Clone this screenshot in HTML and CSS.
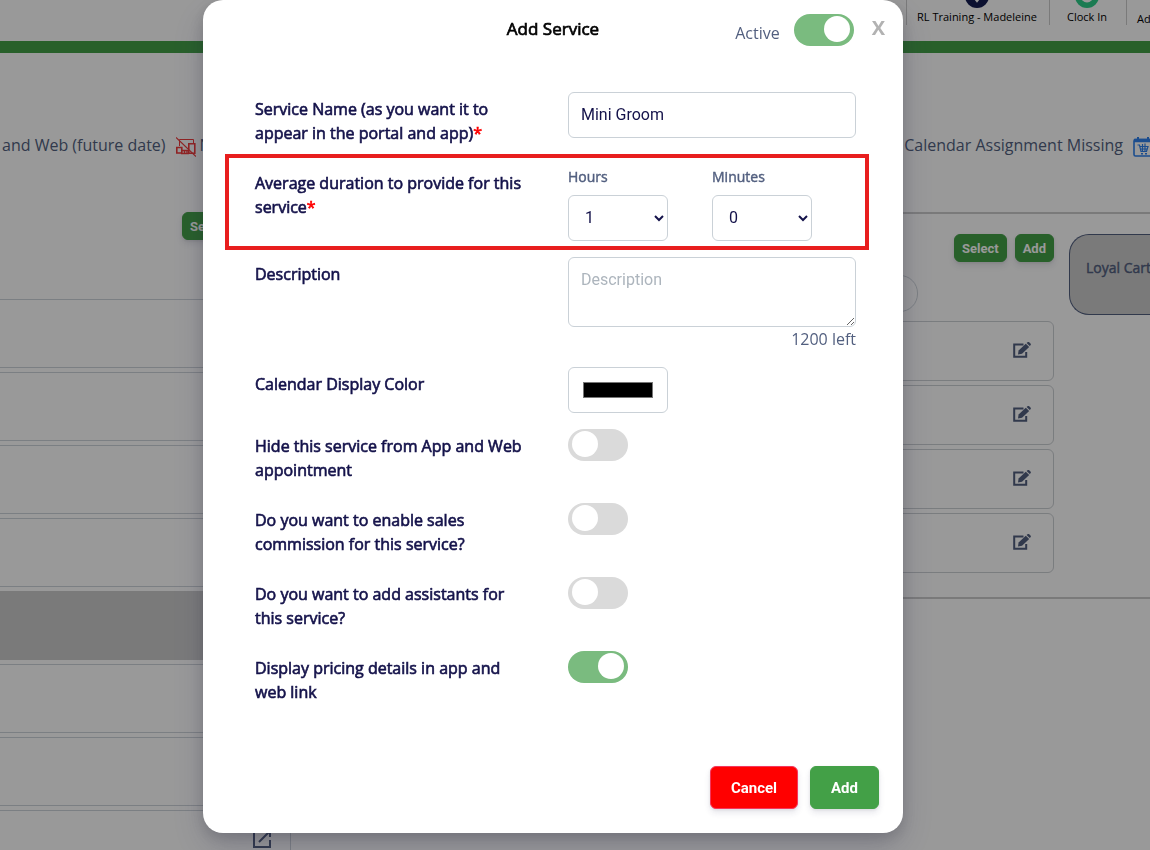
FILE: index.html
```
<!DOCTYPE html>
<html lang="en">
<head>
    <meta charset="UTF-8">
    <meta name="viewport" content="width=device-width, initial-scale=1.0">
    <title>Add Service</title>
    <link rel="stylesheet" href="styles.css">
</head>
<body>

<svg class="sprite" aria-hidden="true">
    <symbol id="icon-edit" viewBox="0 0 18 17">
        <path d="M10.500 2.400H1.200v12.400h12V10" fill="none" stroke="currentColor" stroke-width="2"/>
        <path d="M5 12.400l.6-4L12.800 1.800l3.400 3.200-7.200 6.800z" fill="currentColor"/>
        <path d="M13.600 1l.9-.7c.5-.4 1.200-.4 1.700 0l1.300 1.300c.5.5.5 1.200 0 1.700l-.8.8z" fill="currentColor"/>
    </symbol>
</svg>

<div class="page">
    <header class="topbar">
        <a class="topbar-item location" href="#">
            <svg width="30" height="10" viewBox="0 20 30 10" aria-hidden="true">
                <circle cx="15" cy="15" r="15" fill="#131c50"/>
                <path d="M10 17l5 6.500 5-6.500z" fill="#fff"/>
            </svg>
            <span>RL Training - Madeleine</span>
        </a>
        <a class="topbar-item clock" href="#">
            <svg width="30" height="10" viewBox="0 20 30 10" aria-hidden="true">
                <circle cx="15" cy="15" r="15" fill="#2dce89"/>
                <circle cx="15" cy="15" r="8" fill="#fff"/>
            </svg>
            <span>Clock In</span>
        </a>
        <a class="topbar-item admin" href="#"><span>Admin</span></a>
    </header>

    <div class="legend">
        <div class="legend-group">
            <span>and Web (future date)</span>
            <svg width="20" height="20" viewBox="0 0 20 20" fill="none" stroke="#f03a3a" aria-hidden="true">
                <path d="M3.500 9V2.500h14V6"/>
                <path d="M.8 10.500h5v5.500h-5zM12.800 6.800h6v9.500h-6z" stroke-width="1.600"/>
                <path d="M6 13.500h6.500M8.500 14v2M11 14v2M5 16.500h8" stroke-width="1.400"/>
                <path d="M0 .5l20 19" stroke-width="1.200"/>
            </svg>
            <span>Not</span>
        </div>
        <div class="legend-group legend-end">
            <span>Calendar Assignment Missing</span>
            <svg width="20" height="20" viewBox="0 0 20 20" fill="none" stroke="#2f80ed" aria-hidden="true">
                <rect x="1" y="2.500" width="18" height="16.500" rx="1.500" stroke-width="1.600"/>
                <path d="M1 3.500h18" stroke-width="3.500"/>
                <path d="M5 0v3M15 0v3" stroke-width="2"/>
                <path d="M4.500 8h2l1.500 6.500h5.500l1.500-5H7M8 12h6.500M9.500 7v7M12 6.500v8" stroke-width="1.200"/>
                <path d="M8 16.800h2M12 16.800h2" stroke-width="1.600"/>
            </svg>
        </div>
    </div>

    <div class="board">
        <section class="categories">
            <div class="category-actions"><button class="btn btn-small" type="button">Select</button></div>
            <div class="category-list">
                <div class="category"></div>
                <div class="category"></div>
                <div class="category"></div>
                <div class="category"></div>
                <div class="category selected"></div>
                <div class="category"></div>
                <div class="category"></div>
                <div class="category">
                    <svg width="20" height="20" viewBox="0 0 20 20" fill="none" stroke="currentColor" stroke-width="2" aria-hidden="true">
                        <path d="M9 2H2v16h16v-7M12 2h6v6M18 2L7 13"/>
                    </svg>
                </div>
            </div>
        </section>

        <section class="services">
            <div class="service-column">
                <div class="service-actions">
                    <button class="btn btn-small" type="button">Select</button>
                    <button class="btn btn-small" type="button">Add</button>
                </div>
                <input class="search" type="text" aria-label="Search">
                <div class="service-list">
                    <div class="service"><svg width="18" height="17" aria-hidden="true"><use href="#icon-edit"/></svg></div>
                    <div class="service"><svg width="18" height="17" aria-hidden="true"><use href="#icon-edit"/></svg></div>
                    <div class="service"><svg width="18" height="17" aria-hidden="true"><use href="#icon-edit"/></svg></div>
                    <div class="service"><svg width="18" height="17" aria-hidden="true"><use href="#icon-edit"/></svg></div>
                </div>
            </div>
            <div class="loyal-cart">Loyal Cart</div>
        </section>
    </div>
</div>

<div class="overlay">
    <form class="modal" role="dialog" aria-labelledby="modal-title">
        <div class="modal-header">
            <h1 id="modal-title">Add Service</h1>
            <div class="modal-status">
                <label for="active">Active</label>
                <input class="toggle" type="checkbox" id="active" checked>
                <button class="close" type="button" aria-label="Close">X</button>
            </div>
        </div>

        <div class="modal-body">
            <div class="row">
                <label class="row-label" for="name">Service Name (as you want it to appear in the portal and app)<span class="required">*</span></label>
                <input class="field" type="text" id="name" value="Mini Groom">
            </div>
            <div class="row">
                <span class="row-label">Average duration to provide for this service<span class="required">*</span></span>
                <div class="duration">
                    <div class="duration-part">
                        <label for="hours">Hours</label>
                        <select class="field" id="hours"><option>0</option><option selected>1</option><option>2</option></select>
                    </div>
                    <div class="duration-part">
                        <label for="minutes">Minutes</label>
                        <select class="field" id="minutes"><option>0</option><option>15</option><option>30</option></select>
                    </div>
                </div>
                <div class="highlight"></div>
            </div>
            <div class="row">
                <label class="row-label" for="description">Description</label>
                <div>
                    <textarea class="field" id="description" placeholder="Description" maxlength="1200"></textarea>
                    <div class="counter">1200 left</div>
                </div>
            </div>
            <div class="row">
                <label class="row-label" for="color">Calendar Display Color</label>
                <input class="field color" type="color" id="color" value="#000000">
            </div>
            <div class="row">
                <label class="row-label" for="hide">Hide this service from App and Web appointment</label>
                <input class="toggle" type="checkbox" id="hide">
            </div>
            <div class="row">
                <label class="row-label" for="commission">Do you want to enable sales commission for this service?</label>
                <input class="toggle" type="checkbox" id="commission">
            </div>
            <div class="row">
                <label class="row-label" for="assistants">Do you want to add assistants for this service?</label>
                <input class="toggle" type="checkbox" id="assistants">
            </div>
            <div class="row">
                <label class="row-label" for="pricing">Display pricing details in app and web link</label>
                <input class="toggle" type="checkbox" id="pricing" checked>
            </div>
        </div>

        <div class="modal-footer">
            <button class="btn btn-cancel" type="button">Cancel</button>
            <button class="btn" type="submit">Add</button>
        </div>
    </form>
</div>

</body>
</html>
```
FILE: styles.css
```
* { box-sizing: border-box; }
body {
    margin: 0;
    font-family: "Open Sans", sans-serif;
    font-size: 16px;
    line-height: 24px;
    color: #525f7f;
    background: #fff;
}
.sprite { display: none; }
.page { height: 100vh; overflow: hidden; }
button, input, select, textarea { font-family: Roboto, sans-serif; }

/* Top bar */
.topbar {
    display: flex;
    justify-content: flex-end;
    height: 53px;
    border-bottom: 12px solid #43a047;
}
.topbar-item {
    display: flex;
    flex-direction: column;
    align-items: center;
    height: 25px;
    padding: 0 12px 0 10px;
    border-left: 1px solid #ccc;
    color: #000;
    font-size: 11px;
    line-height: 17px;
    text-decoration: none;
    white-space: nowrap;
}
.location { width: 143px; }
.clock { width: 77px; }
.admin { width: 24px; padding: 10px 0 0 10px; align-items: flex-start; }

/* Icon legend */
.legend {
    display: flex;
    justify-content: space-between;
    padding: 80px 0 55px 2px;
}
.legend-group { display: flex; align-items: center; gap: 10px; }
.legend-group span:last-child { margin-left: -6px; }
.legend-end { margin-right: -3px; }
.legend svg { margin-top: 4px; }

/* Category and service lists */
.board { display: grid; grid-template-columns: 291px 1fr; }
.category-actions { display: flex; padding: 0 0 59px 182px; }
.category-list, .service-list { display: grid; gap: 4px; }
.category {
    display: flex;
    align-items: center;
    justify-content: flex-end;
    height: 69px;
    padding: 0 18px;
    margin-left: -4px;
    border: 1px solid #ced4da;
    color: #525f7f;
}
.category:last-child { align-items: flex-start; padding-top: 18px; }
.selected { background: #ccc; border-color: #ccc; }
.services {
    display: flex;
    justify-content: flex-end;
    align-items: flex-start;
    gap: 15px;
    height: 387px;
    padding-top: 20px;
    border-top: 2px solid #ccc;
    border-bottom: 2px solid #ccc;
}
.service-column { width: 350px; }
.service-actions { display: flex; justify-content: flex-end; gap: 8px; }
.search {
    display: block;
    width: 214px;
    height: 37px;
    margin: 13px 0 9px;
    border: 1px solid #ced4da;
    border-radius: 18px;
}
.service {
    display: flex;
    align-items: center;
    justify-content: flex-end;
    height: 60px;
    padding: 0 22px 2px 0;
    border: 1px solid #ccd0d4;
    border-radius: 6px;
}
.loyal-cart {
    width: 81px;
    height: 81px;
    padding: 21px 0 0 16px;
    overflow: hidden;
    white-space: nowrap;
    font-size: 14px;
    background: #ccc;
    border: 1px solid #525f7f;
    border-right: 0;
    border-radius: 20px 0 0 20px;
    -webkit-text-stroke: 0.03em;
}

/* Buttons */
.btn {
    height: 43px;
    padding: 0 20px;
    color: #fff;
    font-size: 15px;
    font-weight: bold;
    background: #43a047;
    border: 1px solid #43a047;
    border-radius: 6px;
    box-shadow: 0 4px 6px rgba(50, 50, 93, 0.11), 0 1px 3px rgba(0, 0, 0, 0.08);
}
.btn-small { height: 28px; padding: 0 7px; font-size: 13px; }
.btn-cancel { background: #f00; border-color: #f5365c; }

/* Modal */
.overlay {
    position: fixed;
    inset: 0;
    display: flex;
    justify-content: center;
    align-items: flex-start;
    padding-left: 6px;
    background: rgba(0, 0, 0, 0.4);
}
.modal {
    width: 100%;
    max-width: 700px;
    padding-bottom: 24px;
    background: #fff;
    border-radius: 20px;
    margin-right: 50px;
    box-shadow: 0 15px 35px rgba(50, 50, 93, 0.2), 0 5px 15px rgba(0, 0, 0, 0.17);
}
.modal-header {
    display: grid;
    grid-template-columns: 1fr auto 1fr;
    align-items: center;
    height: 60px;
    padding: 0 18px;
}
.modal-header h1 {
    grid-column: 2;
    margin: 0;
    padding-bottom: 2px;
    color: #000;
    font-size: 17px;
    font-weight: 400;
    -webkit-text-stroke: 0.04em;
}
.modal-status { display: flex; justify-content: flex-end; align-items: center; }
.modal-status label { margin: 6px 14px 0 0; }
.close {
    margin-left: 18px;
    padding: 0 0 6px;
    color: #b2b2b2;
    font-family: "Open Sans", sans-serif;
    font-size: 20px;
    font-weight: 700;
    background: none;
    border: 0;
}
.modal-body {
    display: grid;
    gap: 16px;
    padding: 32px 47px 57px 52px;
}
.row {
    position: relative;
    display: grid;
    grid-template-columns: 1fr 288px;
    align-items: start;
}
.row-label {
    padding: 5px 40px 5px 0;
    color: #14124a;
    -webkit-text-stroke: 0.04em;
}
.row:nth-child(3) .row-label, .row:nth-child(4) .row-label { padding-bottom: 0; }
.required { color: #f00; }
.field {
    display: block;
    width: 100%;
    height: 46px;
    padding: 10px 12px 12px;
    color: #14124a;
    font-size: 16px;
    line-height: 24px;
    background: #fff;
    border: 1px solid #cad1d7;
    border-radius: 6px;
}
textarea.field { height: 70px; resize: vertical; }
.field::placeholder { color: #adb5bd; }
.duration { display: flex; gap: 44px; }
.duration-part { width: 100px; }
.duration-part label {
    display: block;
    margin-bottom: 8px;
    font-size: 14px;
    line-height: 21px;
    -webkit-text-stroke: 0.03em;
}
.field.color { width: 100px; padding: 10px 12px; }
.counter { text-align: right; }
.highlight {
    position: absolute;
    inset: -12px -13px -9px -30px;
    border: 4px solid #e81e1e;
    pointer-events: none;
}
.toggle {
    appearance: none;
    width: 60px;
    height: 32px;
    margin: 0;
    padding: 2px 4px;
    background: #dadada;
    border-radius: 16px;
}
.toggle::before {
    content: "";
    display: block;
    width: 26px;
    height: 26px;
    background: #fff;
    border-radius: 50%;
}
.toggle:checked { background: #7abb7f; }
.toggle:checked::before { margin-left: auto; }
.modal-footer {
    display: flex;
    justify-content: flex-end;
    gap: 12px;
    padding-right: 24px;
}
```
